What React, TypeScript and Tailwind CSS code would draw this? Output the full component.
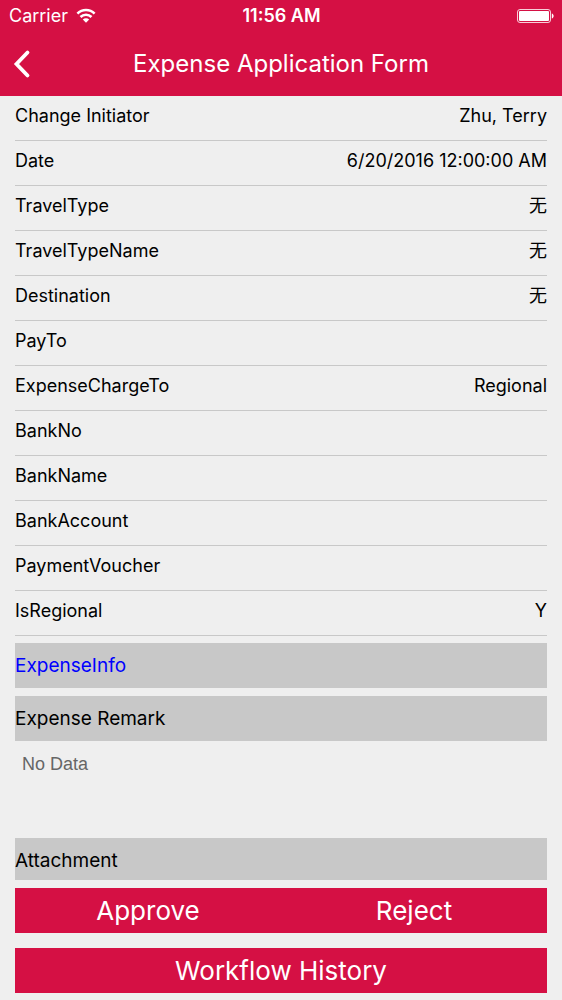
const fields = [
  { label: 'Change Initiator', value: 'Zhu, Terry' },
  { label: 'Date', value: '6/20/2016 12:00:00 AM' },
  { label: 'TravelType', value: '无' },
  { label: 'TravelTypeName', value: '无' },
  { label: 'Destination', value: '无' },
  { label: 'PayTo', value: '' },
  { label: 'ExpenseChargeTo', value: 'Regional' },
  { label: 'BankNo', value: '' },
  { label: 'BankName', value: '' },
  { label: 'BankAccount', value: '' },
  { label: 'PaymentVoucher', value: '' },
  { label: 'IsRegional', value: 'Y' },
];

const StatusBar = () => (
  <div className="grid grid-cols-3 items-center h-8 pl-[9px] pr-2 text-lg">
    <div className="flex items-center gap-2">
      <span>Carrier</span>
      <svg viewBox="0 0 20 14" className="w-5 h-4" fill="none" stroke="currentColor" strokeWidth="2.6">
        <path d="M1.4 4.6a12.2 12.2 0 0 1 17.2 0M4.5 8a7.8 7.8 0 0 1 11 0" />
        <path d="M10 13.8 6.8 10.6a4.5 4.5 0 0 1 6.4 0z" fill="currentColor" stroke="none" />
      </svg>
    </div>
    <span className="text-center font-semibold whitespace-nowrap">11:56 AM</span>
    <svg viewBox="0 0 38 16" className="w-[38px] h-4 justify-self-end" fill="none">
      <rect x="1.5" y="1.5" width="33" height="13" rx="2.5" stroke="currentColor" strokeOpacity="0.8" />
      <rect x="3" y="3" width="30" height="10" rx="1" fill="currentColor" />
      <path d="M35.8 5.5c2.4 0.6 2.4 4.4 0 5z" fill="currentColor" />
    </svg>
  </div>
);

const App = () => {
  return (
    <div className="min-h-screen bg-[#efefef] text-black font-['Inter','Noto_Sans_CJK_SC',sans-serif]">
      <header className="bg-[#d51044] text-white">
        <StatusBar />
        <div className="grid grid-cols-[32px_1fr_32px] items-center h-16 px-2">
          <button type="button" aria-label="Back" className="pl-1">
            <svg viewBox="0 0 20 32" className="w-5 h-8" fill="none" stroke="currentColor" strokeWidth="3.8" strokeLinecap="round">
              <path d="M15.5 4.5 4.5 16l11 11.5" strokeLinejoin="miter" />
            </svg>
          </button>
          <h1 className="text-center text-2xl">Expense Application Form</h1>
        </div>
      </header>

      <main className="px-[15px] pb-[7px]">
        <dl>
          {fields.map((field) => (
            <div key={field.label} className="flex justify-between h-[45px] pt-2 border-b border-[#c8c8c8] text-lg leading-6">
              <dt>{field.label}</dt>
              <dd>{field.value}</dd>
            </div>
          ))}
        </dl>

        <a href="#expense-info" className="flex items-center h-[45px] mt-[7px] pt-0.5 bg-[#c8c8c8] text-[19px] text-[#0000ff]">
          ExpenseInfo
        </a>

        <section>
          <h2 className="flex items-center h-[45px] mt-2 pt-0.5 bg-[#c8c8c8] text-[19px]">Expense Remark</h2>
          <p className="h-[97px] px-[7px] pt-[11px] text-lg leading-6 text-[#666666] font-['Liberation_Sans',sans-serif]">No Data</p>
        </section>

        <h2 className="flex items-center h-[42px] pt-1 bg-[#c8c8c8] text-[19px]">Attachment</h2>

        <div className="grid grid-cols-2 h-[45px] mt-2 bg-[#d51044] text-white text-[26px]">
          <button type="button">Approve</button>
          <button type="button">Reject</button>
        </div>
        <button type="button" className="w-full h-[45px] mt-[15px] bg-[#d51044] text-white text-[26px]">
          Workflow History
        </button>
      </main>
    </div>
  );
};

export default App;
